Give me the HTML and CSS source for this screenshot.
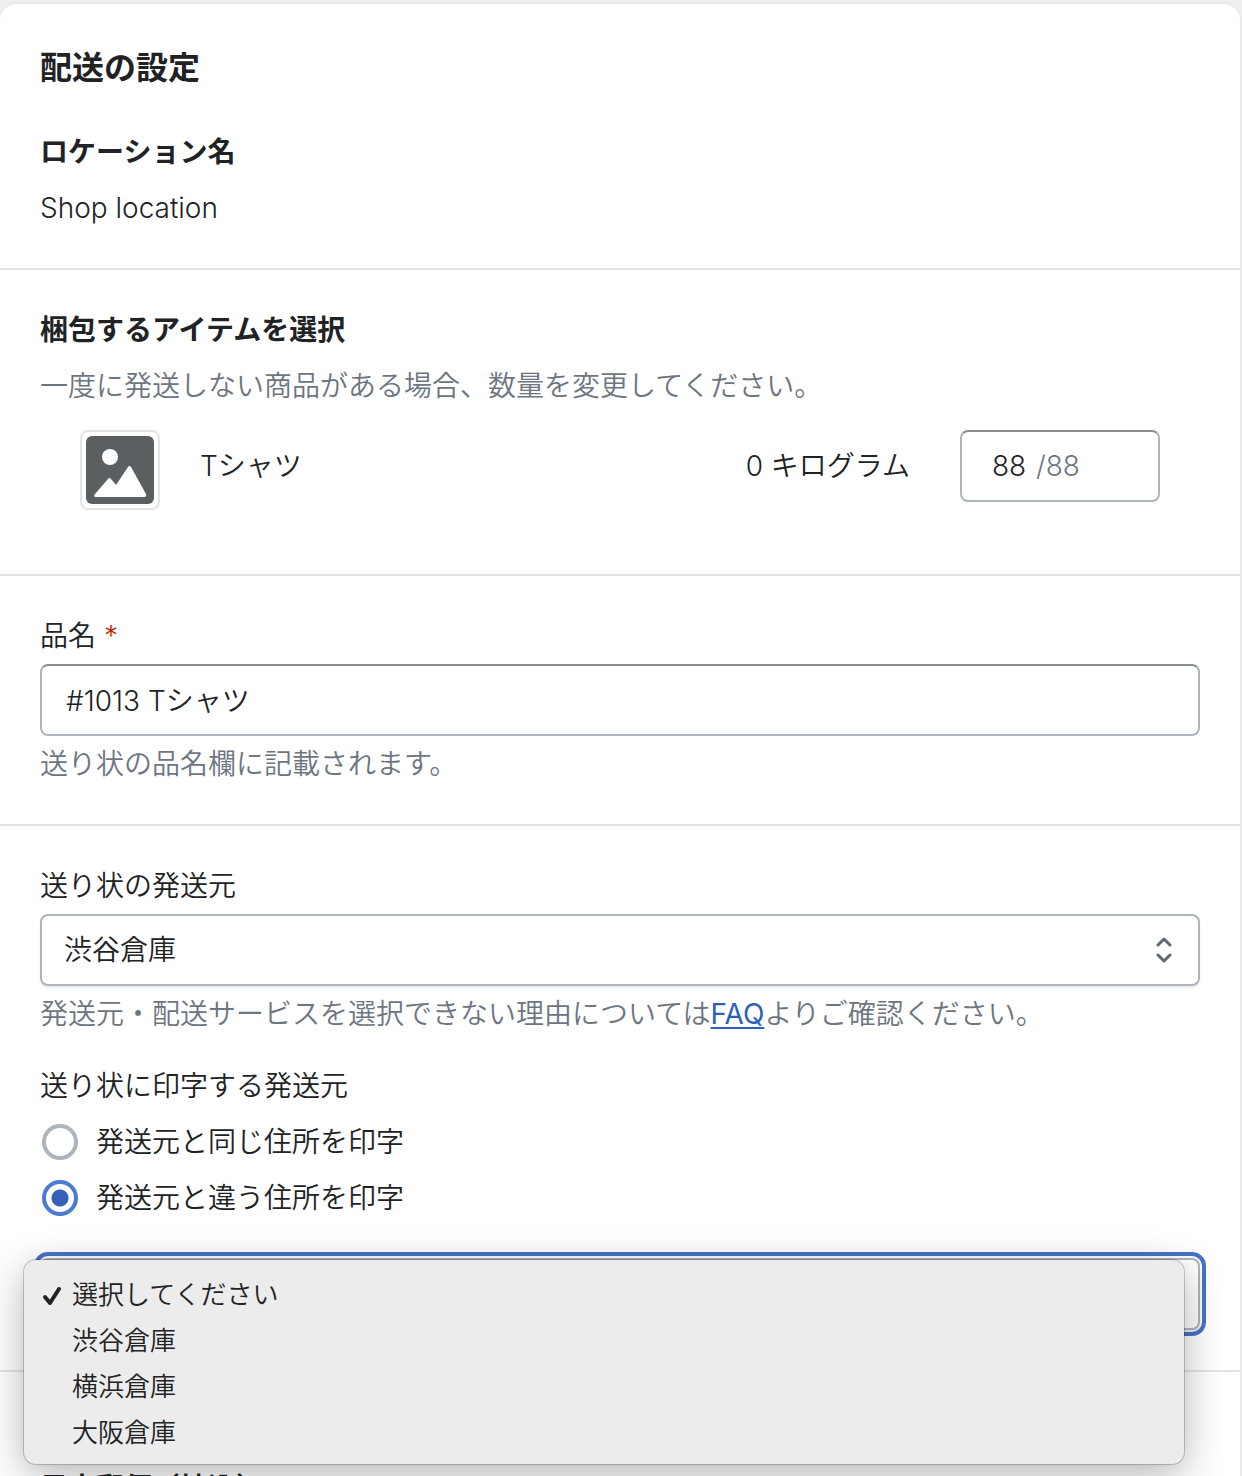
FILE: index.html
```html
<!DOCTYPE html>
<html lang="ja">
<head>
    <meta charset="UTF-8">
    <meta name="viewport" content="width=device-width, initial-scale=1.0">
    <title>配送の設定</title>
    <link rel="stylesheet" href="styles.css">
</head>
<body>

    <main class="card">
        <h1 class="card-title">配送の設定</h1>

        <section class="section">
            <h2>ロケーション名</h2>
            <p>Shop location</p>
        </section>

        <section class="section">
            <h2>梱包するアイテムを選択</h2>
            <p class="muted">一度に発送しない商品がある場合、数量を変更してください。</p>
            <div class="item">
                <div class="thumbnail">
                    <svg viewBox="0 0 68 68" width="68" height="68" aria-hidden="true">
                        <rect width="68" height="68" rx="6" fill="#5c5f62"/>
                        <circle cx="24" cy="21" r="8" fill="#fff"/>
                        <path d="M9 58L22 43q1-2 3 0L30 49L42 31q1-2 3 0L60 58q1 3-2 3H10q-3 0-1-3z" fill="#fff"/>
                    </svg>
                </div>
                <span class="item-name">Tシャツ</span>
                <span class="item-weight">0 キログラム</span>
                <div class="text-box quantity">
                    <input type="text" value="88" aria-label="数量">
                    <span class="muted">/88</span>
                </div>
            </div>
        </section>

        <section class="section">
            <div class="field">
                <label for="product-name">品名 <span class="required">*</span></label>
                <input class="text-box" type="text" id="product-name" value="#1013 Tシャツ">
                <p class="muted">送り状の品名欄に記載されます。</p>
            </div>
        </section>

        <section class="section">
            <div class="field">
                <label for="sender">送り状の発送元</label>
                <div class="select">
                    <select id="sender">
                        <option selected>渋谷倉庫</option>
                        <option>横浜倉庫</option>
                        <option>大阪倉庫</option>
                    </select>
                    <svg class="select-icon" viewBox="0 0 16 26" width="16" height="26" aria-hidden="true">
                        <path d="M2 8l6-6 6 6M2 18l6 6 6-6"/>
                    </svg>
                </div>
                <p class="muted">発送元・配送サービスを選択できない理由については<a href="#faq">FAQ</a>よりご確認ください。</p>
            </div>

            <fieldset class="choices">
                <legend>送り状に印字する発送元</legend>
                <label class="choice"><input type="radio" name="print" value="same">発送元と同じ住所を印字</label>
                <label class="choice"><input type="radio" name="print" value="other" checked>発送元と違う住所を印字</label>
            </fieldset>

            <div class="select open">
                <select id="print-sender" aria-label="印字する発送元">
                    <option selected></option>
                </select>
                <ul class="menu" role="listbox" aria-label="印字する発送元">
                    <li role="option" aria-selected="true">
                        <svg class="check" viewBox="0 0 20 20" width="20" height="20" aria-hidden="true">
                            <path d="M3 11l5 6L17 3"/>
                        </svg>
                        選択してください
                    </li>
                    <li role="option">渋谷倉庫</li>
                    <li role="option">横浜倉庫</li>
                    <li role="option">大阪倉庫</li>
                </ul>
            </div>
        </section>

        <section class="section carrier">
            <h2>日本郵便（持込）</h2>
        </section>
    </main>

</body>
</html>
```

FILE: styles.css
```css
* {
    box-sizing: border-box;
}
html {
    overflow: hidden;
}
body {
    margin: 0;
    padding-top: 4px;
    font-family: Inter, "Noto Sans CJK JP", sans-serif;
    font-size: 28px;
    line-height: 40px;
    font-weight: 350;
    background: #edeef0;
    color: #202223;
}
h1, h2, p, ul, fieldset {
    margin: 0;
    padding: 0;
}
input, select {
    font: inherit;
    color: inherit;
}
.card {
    margin-right: 2px;
    background: #fff;
    border-radius: 16px 16px 0 0;
    box-shadow: 0 0 2px rgba(0, 0, 0, 0.1);
}
.card-title {
    padding: 40px 40px 0;
    font-size: 32px;
    line-height: 48px;
    font-weight: 600;
}
h2 {
    margin-bottom: 16px;
    font-size: 28px;
    font-weight: 600;
}
.section {
    padding: 40px;
}
.section + .section {
    border-top: 2px solid #e1e3e5;
}
.muted {
    color: #6d7580;
}
.required {
    color: #bf2600;
}
a {
    color: #2c5fb8;
    font-weight: 400;
    text-underline-offset: 3px;
}

/* item row */
.item {
    display: flex;
    align-items: flex-start;
    margin: 24px 40px;
}
.thumbnail {
    display: flex;
    align-items: center;
    justify-content: center;
    width: 80px;
    height: 80px;
    border: 2px solid #e1e3e5;
    border-radius: 8px;
}
.item-name {
    flex: 1;
    margin: 16px 40px;
}
.item-weight {
    margin: 16px 50px;
}

/* fields */
.field {
    display: flex;
    flex-direction: column;
    gap: 8px;
}
.text-box, select {
    width: 100%;
    height: 72px;
    padding: 0 24px;
    background: #fff;
    border: 2px solid #aeb4bb;
    border-radius: 8px;
}
.text-box {
    padding-bottom: 2px;
    border-top-color: #898f94;
}
.quantity {
    display: flex;
    align-items: center;
    gap: 6px;
    width: 200px;
    padding: 0 30px;
}
.quantity input {
    width: 38px;
    padding: 0;
    border: none;
    background: none;
}
.select {
    position: relative;
}
select {
    display: block;
    appearance: none;
    padding: 0 22px;
    box-shadow: 0 2px 2px rgba(0, 0, 0, 0.08);
}
.select-icon {
    position: absolute;
    top: 23px;
    right: 28px;
    pointer-events: none;
}
.select-icon path, .check path {
    fill: none;
    stroke: #5f6670;
    stroke-width: 3;
    stroke-linecap: round;
    stroke-linejoin: round;
}

/* radios */
.choices {
    display: flex;
    flex-direction: column;
    gap: 16px;
    margin: 32px 0 40px;
    border: none;
}
.choices legend {
    margin-bottom: 16px;
    padding: 0;
}
.choice {
    display: flex;
    align-items: center;
    gap: 18px;
}
.choice input {
    appearance: none;
    width: 36px;
    height: 36px;
    margin: 0 0 0 2px;
    border: 4px solid #aeb4bb;
    border-radius: 50%;
}
.choice input:checked {
    border-color: #4a7bd0;
    background: radial-gradient(circle, #3462b8 8px, #fff 9px);
}

/* opened drop-down */
.open select {
    outline: 4px solid #4574c9;
    outline-offset: 2px;
}
.menu {
    position: absolute;
    top: 2px;
    left: -16px;
    right: 16px;
    z-index: 10;
    padding: 12px 0 8px;
    list-style: none;
    background: #ececec;
    border-radius: 12px;
    box-shadow: 0 0 0 1px rgba(0, 0, 0, 0.2), 0 10px 40px rgba(0, 0, 0, 0.3);
    font-size: 26px;
    line-height: 46px;
}
.menu li {
    position: relative;
    padding-left: 48px;
}
.check {
    position: absolute;
    top: 14px;
    left: 18px;
}
.check path {
    stroke: #202223;
    stroke-width: 4;
}
.carrier {
    padding-top: 96px;
}
```
